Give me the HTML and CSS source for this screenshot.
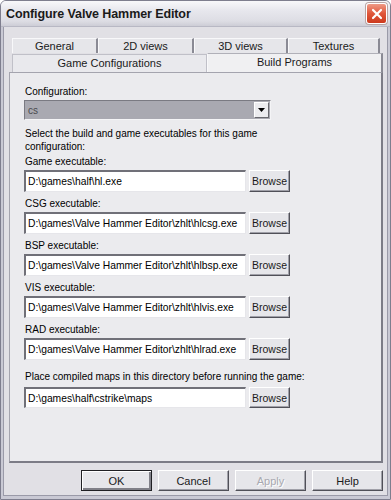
FILE: index.html
```html
<!DOCTYPE html>
<html lang="en">
<head>
    <meta charset="UTF-8">
    <title>Configure Valve Hammer Editor</title>
    <link rel="stylesheet" href="styles.css">
</head>
<body>
<div class="window">
    <div class="titlebar">
        <span class="title">Configure Valve Hammer Editor</span>
        <button class="close">
            <svg width="12" height="12" viewBox="0 0 12 12">
                <path d="M2 2 L10 10 M10 2 L2 10" stroke="#fff" stroke-width="2.2" stroke-linecap="round"/>
            </svg>
        </button>
    </div>

    <div class="client">
        <!-- Tabs -->
        <div class="tabs">
            <div class="tab-row back">
                <div class="tab t1">General</div>
                <div class="tab t2">2D views</div>
                <div class="tab t3">3D views</div>
                <div class="tab t4">Textures</div>
            </div>
            <div class="tab-row front">
                <div class="tab t5">Game Configurations</div>
                <div class="tab t6 active">Build Programs</div>
            </div>
        </div>

        <!-- Build Programs page -->
        <div class="panel">
            <div class="label">Configuration:</div>
            <div class="combo">
                <span class="combo-text">cs</span>
                <span class="combo-btn">
                    <svg width="7" height="4" viewBox="0 0 7 4"><path d="M0 0 H7 L3.5 4 Z" fill="#000"/></svg>
                </span>
            </div>

            <div class="desc">Select the build and game executables for this game<br>configuration:</div>

            <div class="group">
                <div class="label">Game executable:</div>
                <div class="row">
                    <div class="field">D:\games\half\hl.exe</div>
                    <button class="btn browse">Browse</button>
                </div>
            </div>
            <div class="group">
                <div class="label">CSG executable:</div>
                <div class="row">
                    <div class="field">D:\games\Valve Hammer Editor\zhlt\hlcsg.exe</div>
                    <button class="btn browse">Browse</button>
                </div>
            </div>
            <div class="group">
                <div class="label">BSP executable:</div>
                <div class="row">
                    <div class="field">D:\games\Valve Hammer Editor\zhlt\hlbsp.exe</div>
                    <button class="btn browse">Browse</button>
                </div>
            </div>
            <div class="group">
                <div class="label">VIS executable:</div>
                <div class="row">
                    <div class="field">D:\games\Valve Hammer Editor\zhlt\hlvis.exe</div>
                    <button class="btn browse">Browse</button>
                </div>
            </div>
            <div class="group">
                <div class="label">RAD executable:</div>
                <div class="row">
                    <div class="field">D:\games\Valve Hammer Editor\zhlt\hlrad.exe</div>
                    <button class="btn browse">Browse</button>
                </div>
            </div>
            <div class="group maps">
                <div class="label">Place compiled maps in this directory before running the game:</div>
                <div class="row">
                    <div class="field short">D:\games\half\cstrike\maps</div>
                    <button class="btn browse short">Browse</button>
                </div>
            </div>
        </div>

        <!-- Dialog buttons -->
        <div class="buttons">
            <button class="btn dlg default">OK</button>
            <button class="btn dlg">Cancel</button>
            <button class="btn dlg disabled">Apply</button>
            <button class="btn dlg">Help</button>
        </div>
    </div>
</div>
</body>
</html>
```

FILE: styles.css
```css
body {
    margin: 0;
    background: #ffffff;
    font-family: "Liberation Sans", Arial, sans-serif;
    font-size: 10px;
    color: #000;
}
.window {
    width: 391px;
    height: 500px;
    box-sizing: border-box;
    background: #e1e0e5;
    border: 1px solid #7e7e8e;
    border-radius: 6px 6px 0 0;
    display: flex;
    flex-direction: column;
    overflow: hidden;
}
.titlebar {
    height: 25px;
    flex: none;
    display: flex;
    align-items: center;
    padding: 0 3px 0 5px;
    background: linear-gradient(#f8f8fa, #e8e8ee 35%, #dddde4 80%, #cdcdd6);
    border-bottom: 1px solid #b8b8c4;
}
.title {
    flex: 1;
    font-weight: bold;
    font-size: 12.5px;
    color: #1a1a1a;
    letter-spacing: -0.1px;
}
.close {
    width: 21px;
    height: 21px;
    padding: 0;
    border: 1px solid #fff;
    border-radius: 3px;
    background: linear-gradient(#ee9a86, #e0563a 50%, #cc3a1e);
    display: flex;
    align-items: center;
    justify-content: center;
    box-shadow: 0 0 0 1px #b8a4a4;
}
.client {
    flex: 1;
    display: flex;
    flex-direction: column;
    padding: 11px 5px 0 6px;
    border-left: 2px solid #c9c9d4;
    border-right: 2px solid #c9c9d4;
    border-bottom: 3px solid #c9c9d4;
    box-shadow: inset 1px 0 #9a9aa8, inset -1px 0 #9a9aa8, inset 0 -1px #9a9aa8;
}
.tabs {
    padding-left: 3px;
}
.tab-row {
    display: flex;
}
.tab {
    box-sizing: border-box;
    text-align: center;
    font-size: 11px;
    color: #1a1a1a;
    background: #e6e6ea;
    border-top: 1px solid #f8f8fa;
    border-left: 1px solid #f8f8fa;
    border-right: 2px solid #8a8a94;
}
.back .tab {
    height: 15px;
    line-height: 14px;
}
.t1 { width: 86px; }
.t2 { width: 96px; }
.t3 { width: 94px; }
.t4 { width: 92px; }
.front .tab {
    height: 18px;
}
.t5 {
    width: 195px;
    margin-top: 1px;
    line-height: 17px;
    background: #e9e9ed;
    border-top: 1px solid #c0c0c8;
    border-left: 1px solid #c0c0c8;
    border-right: 1px solid #c0c0c8;
}
.t6 {
    width: 176px;
    line-height: 16px;
    background: #f0f0f2;
    border-top: 1px solid #b0b0b8;
    border-right: 2px solid #8a8a94;
    position: relative;
    z-index: 1;
    height: 19px !important;
    margin-bottom: -1px;
}
.panel {
    width: 374px;
    height: 391px;
    box-sizing: border-box;
    background: #ebebee;
    border: 1px solid #a4a4ae;
    border-right: 2px solid #7c7c86;
    border-bottom: 2px solid #7c7c86;
    padding: 12px 0 0 15px;
    display: flex;
    flex-direction: column;
}
.label {
    line-height: 13px;
    height: 13px;
    white-space: nowrap;
}
.combo {
    margin-top: 2px;
    margin-left: -1px;
    width: 247px;
    height: 20px;
    box-sizing: border-box;
    background: #a9a9b1;
    border-top: 1px solid #7a7a82;
    border-left: 1px solid #7a7a82;
    border-right: 1px solid #f4f4f6;
    border-bottom: 1px solid #f4f4f6;
    display: flex;
    align-items: center;
    padding: 0 1px 0 3px;
}
.combo-text {
    flex: 1;
    color: #4a4a4e;
    font-size: 10px;
}
.combo-btn {
    width: 15px;
    height: 16px;
    box-sizing: border-box;
    background: #ececef;
    border-top: 1px solid #fff;
    border-left: 1px solid #fff;
    border-right: 1px solid #6a6a70;
    border-bottom: 1px solid #6a6a70;
    display: flex;
    align-items: center;
    justify-content: center;
}
.desc {
    margin-top: 7px;
    line-height: 13px;
}
.group {
    margin-top: 5px;
}
.desc + .group {
    margin-top: 2px;
}
.row {
    display: flex;
    margin-top: 2px;
    margin-left: -1px;
}
.field {
    width: 222px;
    height: 22px;
    box-sizing: border-box;
    background: #fff;
    border-top: 2px solid #707078;
    border-left: 2px solid #707078;
    border-right: 1px solid #e6e6ea;
    border-bottom: 1px solid #e6e6ea;
    padding: 2px 0 0 2px;
    font-size: 10.3px;
    line-height: 16px;
    white-space: nowrap;
    overflow: hidden;
}
.group.maps {
    margin-top: 10px;
}
.maps .row {
    margin-top: 4px;
}
.btn {
    font-family: "Liberation Sans", Arial, sans-serif;
    font-size: 10.5px;
    color: #1a1a1a;
    background: #e6e6ea;
    box-sizing: border-box;
    border-top: 1px solid #fff;
    border-left: 1px solid #fff;
    border-right: 1px solid #505058;
    border-bottom: 1px solid #505058;
    box-shadow: inset -1px -1px #a0a0a8;
    padding: 0;
}
.browse {
    width: 41px;
    height: 22px;
    margin-left: 3px;
}
.short {
    height: 21px;
}
.buttons {
    display: flex;
    justify-content: flex-end;
    gap: 6px;
    margin-top: 7px;
}
.dlg {
    width: 71px;
    height: 21px;
    font-size: 11px;
}
.default {
    border: 1px solid #202024;
    box-shadow: inset 1px 1px #fff, inset -2px -2px #808088;
}
.disabled {
    color: #a8a8b0;
    text-shadow: 1px 1px #fff;
}
```
